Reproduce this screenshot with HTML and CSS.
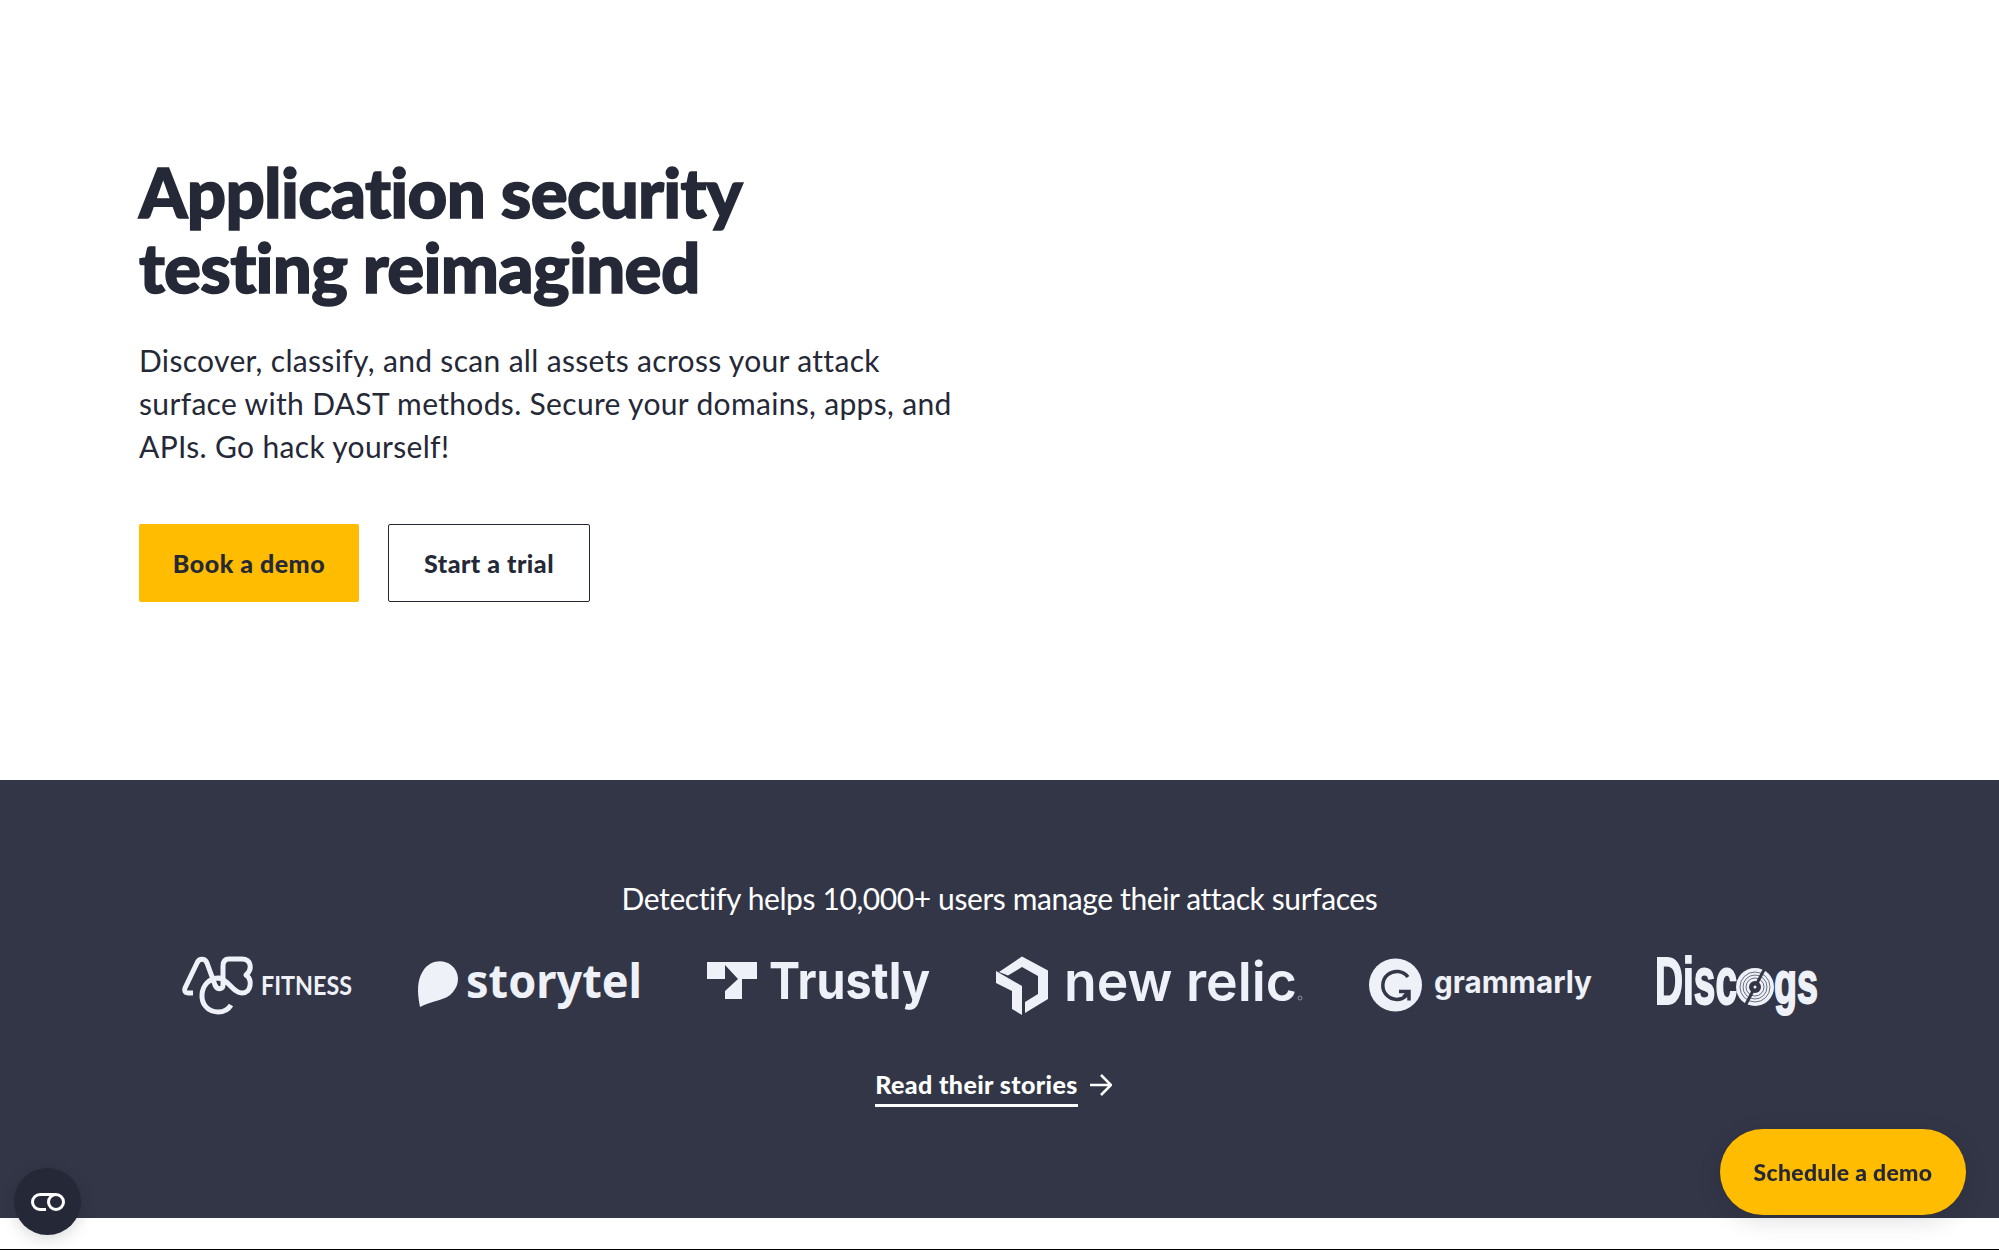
FILE: index.html
```html
<!DOCTYPE html>
<html lang="en">
<head>
	<meta charset="utf-8">
	<title>Application security testing reimagined</title>
	<link rel="stylesheet" href="styles.css">
</head>
<body>

	<!-- Hero -->
	<section class="hero">
		<h1 class="hero-title">Application security<br>testing reimagined</h1>
		<p class="hero-text">Discover, classify, and scan all assets across your attack<br>surface with DAST methods. Secure your domains, apps, and<br>APIs. Go hack yourself!</p>
		<div class="hero-buttons">
			<a class="btn btn-primary" href="#">Book a demo</a>
			<a class="btn btn-outline" href="#">Start a trial</a>
		</div>
	</section>

	<!-- Customer logos -->
	<section class="customers">
		<h2 class="customers-title">Detectify helps 10,000+ users manage their attack surfaces</h2>
		<div class="logos">
			<svg class="logo" width="173" height="70" viewBox="180 950 173 70">
				<path class="logo-line" d="M192 993h-5c-3 0-4-2-3-5l12-25c2-5 8-5 10 0l8 22c2 5 8 5 8 0v-19c0-5 2-7 6-7h13c9 0 11 10 4 16c7 5 5 18-4 18c-9 0-13-13-23-15c-21 0-24 33-1 34q9 0 13-7"/>
				<text x="260" y="995" textLength="91" lengthAdjust="spacingAndGlyphs" font-size="27" class="logo-lato">FITNESS</text>
			</svg>
			<svg class="logo" width="225" height="70" viewBox="417 950 225 70">
				<path d="M419 1007c-3-15-3-27 3-36c7-11 20-12 28-6c9 7 9 19 2 27c-7 9-20 8-33 15z"/>
				<text x="465" y="998" textLength="176" lengthAdjust="spacingAndGlyphs" font-size="47" class="logo-noto">storytel</text>
			</svg>
			<svg class="logo" width="225" height="70" viewBox="706 950 225 70">
				<path d="M706 962h50v17h-15v20h-17v-8l13-12l-13-14v14h-18z"/>
				<text x="768" y="999" textLength="161" lengthAdjust="spacingAndGlyphs" font-size="51" class="logo-inter">Trustly</text>
			</svg>
			<svg class="logo" width="309" height="70" viewBox="995 950 309 70">
				<path d="M998 972l23-15.500l26 14v28.500l-23 14v-11l13-8v-18l-16-9l-14 8.500z"/>
				<path d="M995 971l26 15v29l-10-6v-18l-16-8z"/>
				<text x="1063" y="1001" textLength="233" lengthAdjust="spacingAndGlyphs" font-size="54" class="logo-relic">new relic</text>
				<circle cx="1299" cy="998" r="2" fill="none" stroke="#8b8f9e"/>
			</svg>
			<svg class="logo" width="224" height="70" viewBox="1368 950 224 70">
				<circle cx="1394.500" cy="985" r="26.500"/>
				<path class="ink" d="M1407 977a14 14 0 1 0-1 18"/>
				<path class="ink" d="M1398 991.500h10v9M1407.500 992l-5 5"/>
				<text x="1433" y="993" textLength="158" lengthAdjust="spacingAndGlyphs" font-size="31" class="logo-inter">grammarly</text>
			</svg>
			<svg class="logo" width="162" height="70" viewBox="1656 950 162 70">
				<text x="1654" y="1004" textLength="82" lengthAdjust="spacingAndGlyphs" font-size="66" class="logo-disc">Disc</text>
				<text x="1773" y="1003" textLength="44" lengthAdjust="spacingAndGlyphs" font-size="59" class="logo-disc">gs</text>
				<circle cx="1754" cy="987" r="19"/>
				<g fill="none" stroke="#333647" stroke-width=".7">
					<circle cx="1754" cy="987" r="9"/>
					<circle cx="1754" cy="987" r="12"/>
					<circle cx="1754" cy="987" r="15"/>
					<path stroke-width="3" d="M1764 968l-20 38"/>
				</g>
				<circle cx="1754" cy="987" r="6" fill="#333647"/>
				<circle cx="1754" cy="987" r="1.500"/>
			</svg>
		</div>
		<a class="stories" href="#">
			<span class="stories-label">Read their stories</span>
			<svg width="22" height="22" viewBox="0 0 22 22"><path d="M0 11h20M11 1l10 10l-10 10"/></svg>
		</a>
	</section>

	<!-- Floating widgets -->
	<button class="cookie-btn" aria-label="Cookie settings">
		<svg width="34" height="18" viewBox="0 0 34 18"><path d="M15 16.500H9a7.500 7.500 0 0 1 0-15h16"/><circle cx="25" cy="9" r="7.500"/></svg>
	</button>
	<a class="schedule-btn" href="#">Schedule a demo</a>

</body>
</html>
```
FILE: styles.css
```css
* {
	box-sizing: border-box;
}

body {
	margin: 0;
	height: 1250px;
	overflow: hidden;
	background-color: #fff;
	border-bottom: 1px solid #000;
	font-family: Lato, "Open Sans", sans-serif;
	font-variant-ligatures: none;
	color: #252836;
}

a {
	color: inherit;
	text-decoration: none;
}

/* Hero */
.hero {
	height: 780px;
	padding: 154px 139px 0;
}

.hero-title {
	margin: 0;
	font-size: 69px;
	font-weight: 900;
	line-height: 75px;
	letter-spacing: -0.7px;
	white-space: nowrap;
	-webkit-text-stroke: 1.5px #252836;
}

.hero-text {
	margin: 35px 0 0;
	font-size: 30px;
	line-height: 43px;
	letter-spacing: 0.33px;
	white-space: nowrap;
}

.hero-buttons {
	display: flex;
	gap: 29px;
	margin-top: 56px;
}

.btn {
	display: flex;
	align-items: center;
	justify-content: center;
	height: 78px;
	border-radius: 2px;
	font-size: 25px;
	font-weight: 900;
	letter-spacing: 0.5px;
}

.btn-primary {
	width: 220px;
	background-color: #ffbc00;
}

.btn-outline {
	width: 202px;
	border: 1px solid #252836;
}

/* Customers */
.customers {
	display: flex;
	flex-direction: column;
	align-items: center;
	height: 438px;
	padding-top: 97px;
	background-color: #333647;
	color: #fff;
}

.customers-title {
	margin: 0;
	font-size: 30px;
	font-weight: 400;
	line-height: 43px;
	letter-spacing: -0.4px;
}

.logos {
	display: flex;
	gap: 64px;
	margin-top: 30px;
}

.logo {
	overflow: visible;
	fill: #eef1f8;
}

.logo-line {
	fill: none;
	stroke: #eef1f8;
	stroke-width: 5;
	stroke-linejoin: round;
}

.logo-lato {
	font-family: Lato, sans-serif;
	font-weight: 700;
}

.logo-noto {
	font-family: "Noto Sans", sans-serif;
	font-weight: 700;
}

.logo-inter {
	font-family: Inter, sans-serif;
	font-weight: 700;
}

.logo-relic {
	font-family: Inter, sans-serif;
	font-weight: 600;
}

.logo-disc {
	font-family: "Liberation Sans", sans-serif;
	font-weight: 700;
	stroke: #eef1f8;
	stroke-width: 2;
}

.ink {
	fill: none;
	stroke: #333647;
	stroke-width: 3.5;
}

.stories {
	display: flex;
	gap: 12px;
	margin: 48px 12px 0 0;
}

.stories-label {
	height: 39px;
	border-bottom: 3px solid #fff;
	font-size: 25px;
	font-weight: 900;
	line-height: 33px;
	letter-spacing: 0.4px;
}

.stories svg {
	margin-top: 6px;
	fill: none;
	stroke: #fff;
	stroke-width: 2.5;
}

/* Floating widgets */
.cookie-btn {
	position: fixed;
	left: 14px;
	top: 1168px;
	display: flex;
	align-items: center;
	justify-content: center;
	width: 67px;
	height: 67px;
	padding: 0;
	border: none;
	border-radius: 50%;
	background-color: #252836;
	box-shadow: 0 4px 16px rgba(0, 0, 0, 0.15);
}

.cookie-btn svg {
	fill: none;
	stroke: #fff;
	stroke-width: 3;
}

.schedule-btn {
	position: fixed;
	left: 1720px;
	top: 1129px;
	display: flex;
	align-items: center;
	justify-content: center;
	width: 246px;
	height: 86px;
	border-radius: 43px;
	background-color: #ffbc00;
	box-shadow: 0 6px 24px rgba(0, 0, 0, 0.12);
	font-size: 23px;
	font-weight: 900;
	letter-spacing: 0.3px;
}
```
